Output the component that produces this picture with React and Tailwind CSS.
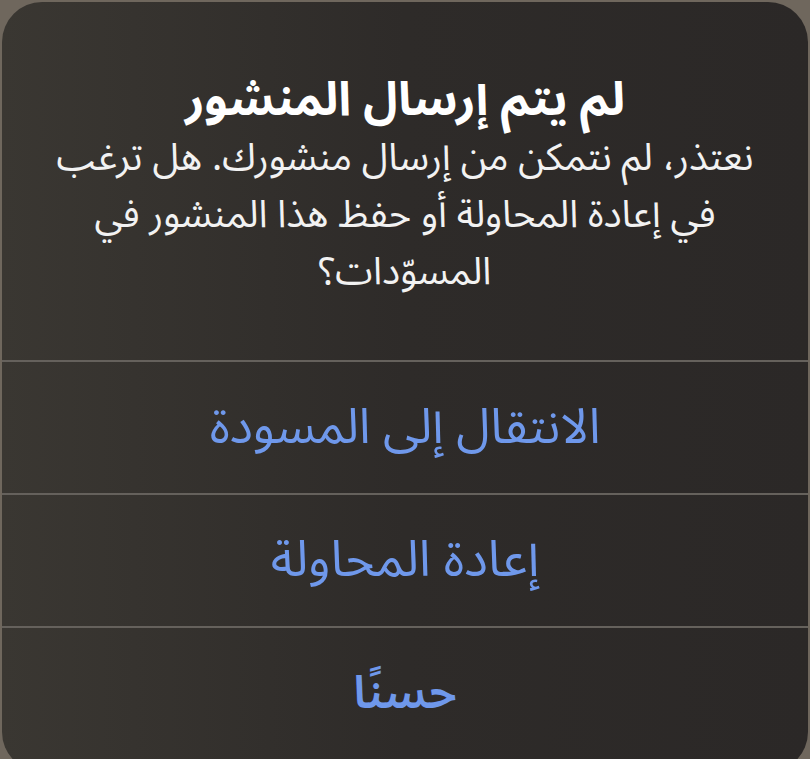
import React from 'react';

const actions = [
  { label: 'الانتقال إلى المسودة', cls: 'text-[49px] font-normal' },
  { label: 'إعادة المحاولة', cls: 'text-[50px] font-normal' },
  { label: 'حسنًا', cls: 'text-[46px] font-semibold' },
];

const lines = [
  'نعتذر، لم نتمكن من إرسال منشورك. هل ترغب',
  'في إعادة المحاولة أو حفظ هذا المنشور في',
  'المسوّدات؟',
];

export default function App() {
  return (
    <div
      dir="rtl"
      className="w-[810px] h-[759px] overflow-hidden bg-[#6f675d]"
      style={{ fontFamily: '"Noto Sans Arabic", "DejaVu Sans", "Noto Sans", sans-serif' }}
    >
      <div className="mx-[2px] mt-[2px] h-[770px] rounded-[40px] bg-gradient-to-l from-[#2b2827] via-[#2e2b29] to-[#3a3732] flex flex-col">
        {/* Message */}
        <div className="h-[358px] flex flex-col items-center pt-[70px] text-center text-white">
          <h1 className="text-[47px] font-bold leading-[56px]">لم يتم إرسال المنشور</h1>
          <div className="mt-[2px] text-[38px] text-[#f2f2f2] whitespace-nowrap">
            {lines.map((l) => (
              <p key={l} className="leading-[57px]">{l}</p>
            ))}
          </div>
        </div>

        {/* Actions */}
        {actions.map((a) => (
          <div key={a.label} className="border-t-2 border-[#65615c]">
            <button className={`w-full h-[131px] flex items-center justify-center text-[#6f98eb] ${a.cls}`}>
              {a.label}
            </button>
          </div>
        ))}
      </div>
    </div>
  );
}
